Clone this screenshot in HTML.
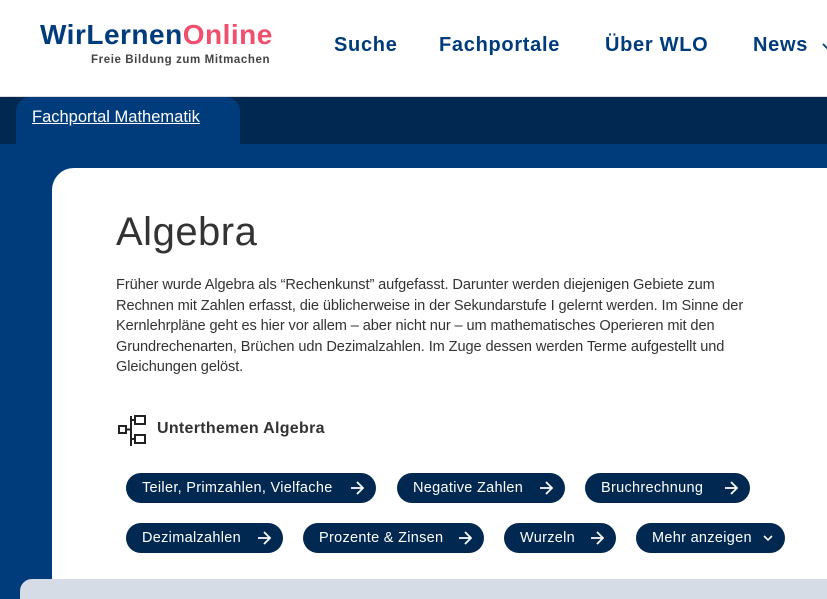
<!DOCTYPE html>
<html><head><meta charset="utf-8"><style>
*{margin:0;padding:0;box-sizing:border-box}
body{width:827px;height:587px;overflow:hidden;background:#003b7c;font-family:"Liberation Sans",sans-serif;position:relative}
.hdr{position:absolute;left:0;top:0;width:827px;height:97px;background:#fff;border-bottom:1px solid #ddd}
.logo{position:absolute;left:40px;top:19px;font-size:28px;font-weight:bold;color:#003b7c;letter-spacing:0.5px}
.logo span{color:#f0506e}
.tag{position:absolute;left:91px;top:54px;font-size:11.5px;font-weight:bold;color:#444;letter-spacing:0.6px}
.nav{position:absolute;top:34px;font-size:20px;font-weight:bold;color:#003b7c;letter-spacing:0.7px}
.bar{position:absolute;left:0;top:97px;width:827px;height:47px;background:#002850}
.tab{position:absolute;left:16px;top:97px;width:224px;height:50px;background:#003b7c;border-radius:14px 14px 0 0;color:#fff;font-size:16.5px;text-decoration:underline;padding:11px 0 0 16px}
.card{position:absolute;left:52px;top:168px;width:800px;height:430px;background:#fff;border-radius:22px 0 0 0}
h1{position:absolute;left:116px;top:210px;font-size:40px;font-weight:normal;color:#333;letter-spacing:0.5px}
p{position:absolute;left:116px;top:275px;width:660px;font-size:14.6px;line-height:20.5px;color:#333;letter-spacing:-0.1px}
.sub{position:absolute;left:157px;top:420px;font-size:16px;font-weight:bold;color:#333;letter-spacing:0.3px}
.chip{position:absolute;height:30px;background:#002850;color:#fff;border-radius:15px;font-size:14.5px;line-height:30px;padding-left:16px;letter-spacing:0.3px}
.chip svg{position:absolute;right:12px;top:8px}
.foot{position:absolute;left:20px;top:579px;width:820px;height:20px;background:#d5dce6;border-radius:12px 0 0 0}
</style></head><body>
<div class="hdr">
<div class="logo">WirLernen<span>Online</span></div>
<div class="tag">Freie Bildung zum Mitmachen</div>
<div class="nav" style="left:334px">Suche</div>
<div class="nav" style="left:439px">Fachportale</div>
<div class="nav" style="left:605px">Über WLO</div>
<div class="nav" style="left:753px">News</div>
<svg style="position:absolute;left:822px;top:42px" width="10" height="8"><path d="M1 2l4 4 4-4" stroke="#003b7c" stroke-width="1.8" fill="none"/></svg>
</div>
<div class="bar"></div>
<div class="tab">Fachportal Mathematik</div>
<div class="card"></div>
<h1>Algebra</h1>
<p>Früher wurde Algebra als “Rechenkunst” aufgefasst. Darunter werden diejenigen Gebiete zum Rechnen mit Zahlen erfasst, die üblicherweise in der Sekundarstufe I gelernt werden. Im Sinne der Kernlehrpläne geht es hier vor allem – aber nicht nur – um mathematisches Operieren mit den Grundrechenarten, Brüchen udn Dezimalzahlen. Im Zuge dessen werden Terme aufgestellt und Gleichungen gelöst.</p>
<svg style="position:absolute;left:117px;top:414px" width="32" height="34" viewBox="0 0 32 34" fill="none" stroke="#222" stroke-width="2"><rect x="2" y="12" width="7" height="7"/><line x1="9" y1="15.5" x2="14" y2="15.5"/><line x1="14" y1="2" x2="14" y2="32"/><rect x="18" y="2" width="10" height="8"/><rect x="18" y="21" width="10" height="8"/><line x1="14" y1="6" x2="18" y2="6"/><line x1="14" y1="25" x2="18" y2="25"/></svg>
<div class="sub">Unterthemen Algebra</div>
<div class="chip" style="left:126px;top:473px;width:250px">Teiler, Primzahlen, Vielfache<svg width="14" height="14"><path d="M1 7h12M7 1l6 6-6 6" stroke="#fff" stroke-width="1.8" fill="none"/></svg></div>
<div class="chip" style="left:397px;top:473px;width:168px">Negative Zahlen<svg width="14" height="14"><path d="M1 7h12M7 1l6 6-6 6" stroke="#fff" stroke-width="1.8" fill="none"/></svg></div>
<div class="chip" style="left:585px;top:473px;width:165px">Bruchrechnung<svg width="14" height="14"><path d="M1 7h12M7 1l6 6-6 6" stroke="#fff" stroke-width="1.8" fill="none"/></svg></div>
<div class="chip" style="left:126px;top:523px;width:157px">Dezimalzahlen<svg width="14" height="14"><path d="M1 7h12M7 1l6 6-6 6" stroke="#fff" stroke-width="1.8" fill="none"/></svg></div>
<div class="chip" style="left:303px;top:523px;width:181px">Prozente &amp; Zinsen<svg width="14" height="14"><path d="M1 7h12M7 1l6 6-6 6" stroke="#fff" stroke-width="1.8" fill="none"/></svg></div>
<div class="chip" style="left:504px;top:523px;width:112px">Wurzeln<svg width="14" height="14"><path d="M1 7h12M7 1l6 6-6 6" stroke="#fff" stroke-width="1.8" fill="none"/></svg></div>
<div class="chip" style="left:636px;top:523px;width:149px">Mehr anzeigen<svg width="10" height="14"><path d="M1 5l4 4 4-4" stroke="#fff" stroke-width="1.6" fill="none"/></svg></div>
<div class="foot"></div>
</body></html>
